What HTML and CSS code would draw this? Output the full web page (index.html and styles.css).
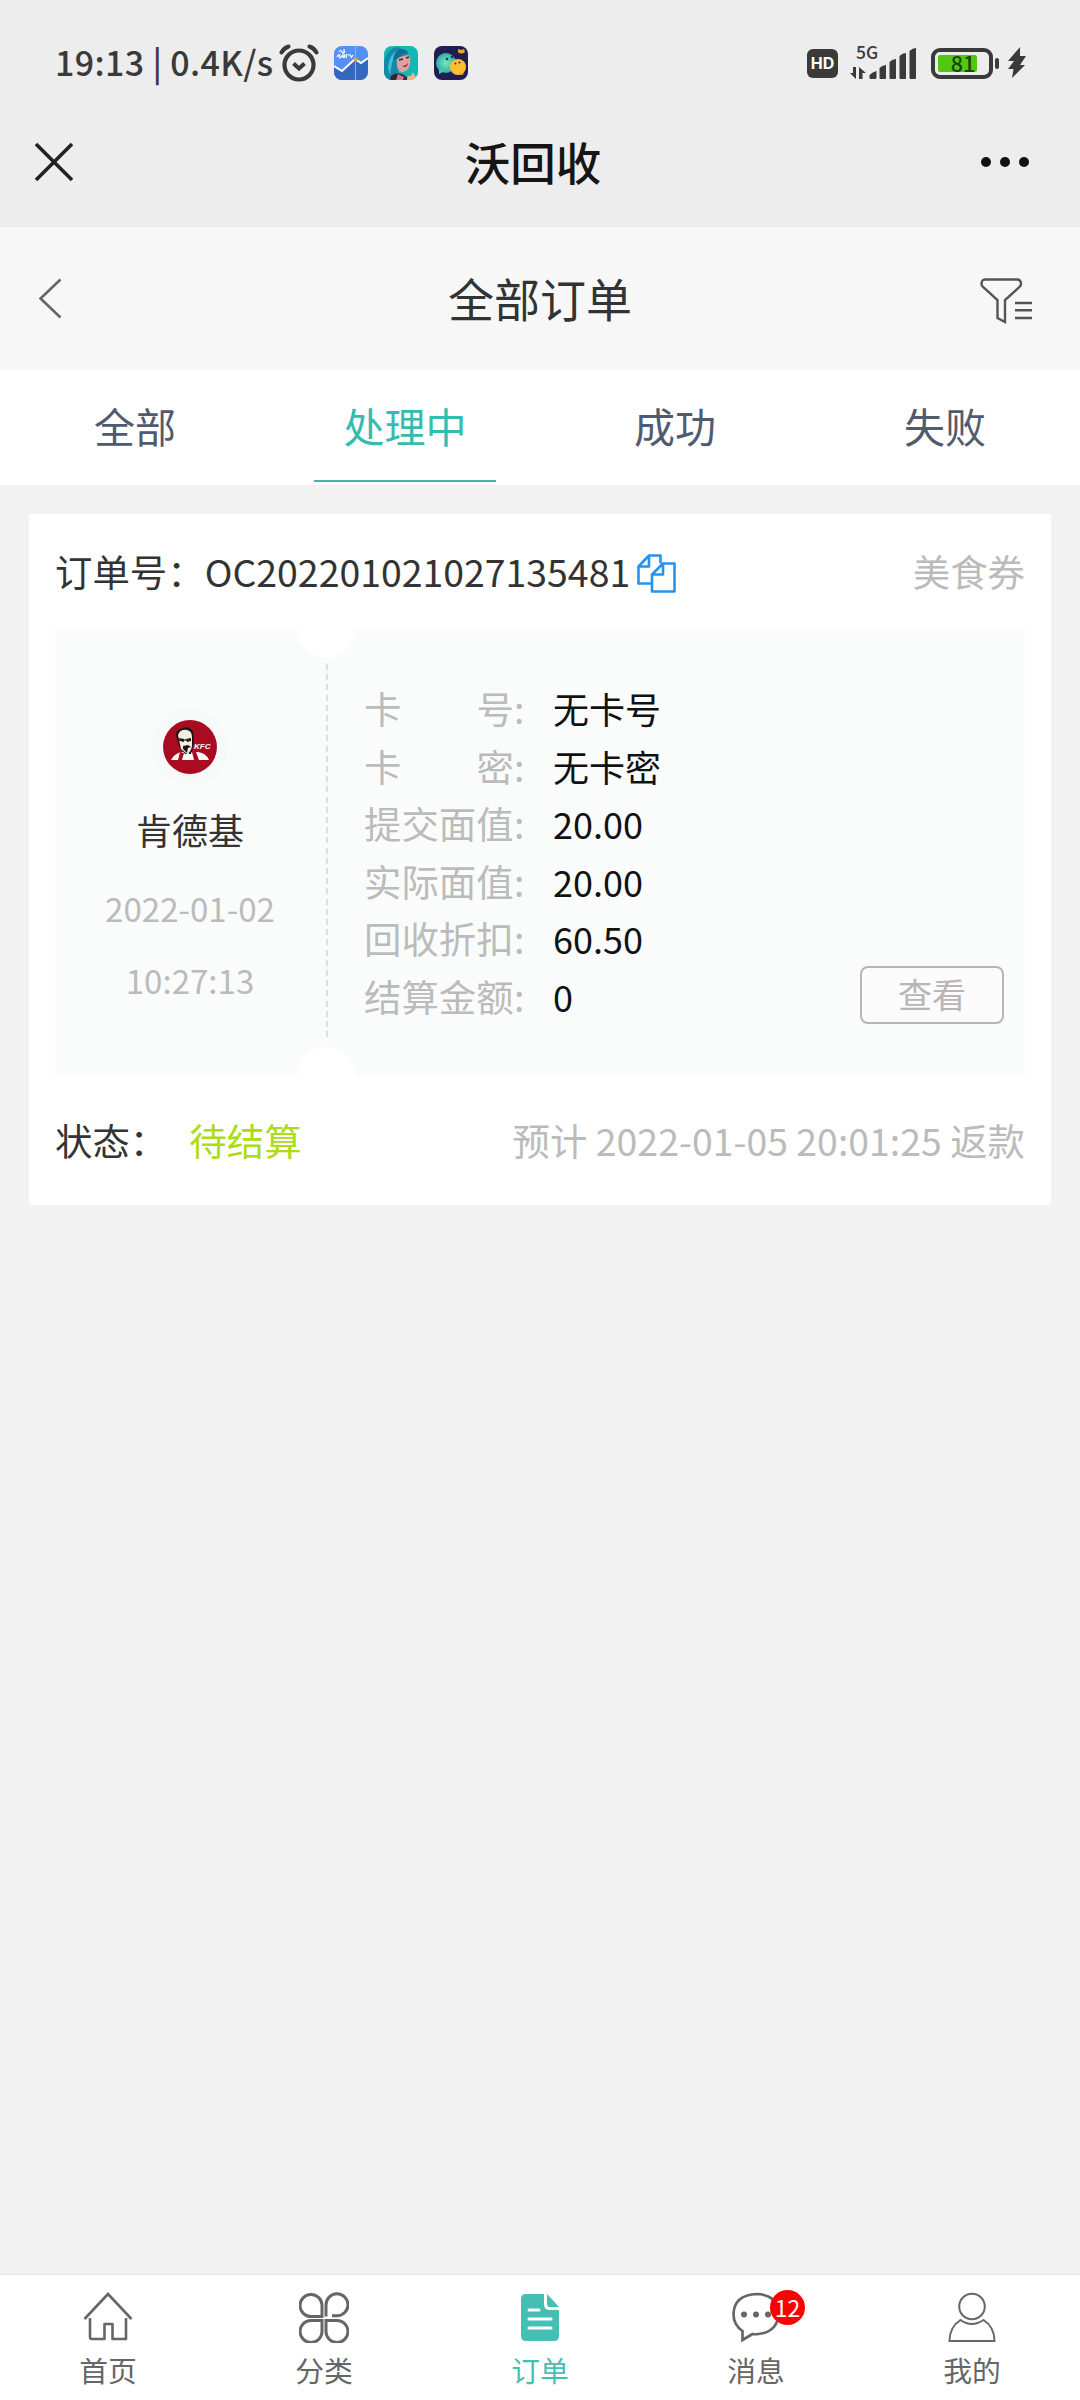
FILE: index.html
```html
<!DOCTYPE html>
<html lang="zh-CN">
<head>
<meta charset="utf-8">
<title>全部订单</title>
<link rel="stylesheet" href="styles.css">
</head>
<body>
<div class="app">
  <header class="system">
    <div class="status">
      <span class="status-text">19:13 | 0.4K/s</span>
      <svg class="alarm" width="40" height="40" viewBox="0 0 40 40" fill="none" stroke="#3a3a3a" stroke-linecap="round"><circle cx="20" cy="22" r="14.5" stroke-width="4.200"/><path d="M14.5 20.500l5.500 5 5.500-5" stroke-width="4" stroke-linecap="butt"/><path d="M2.500 9.500Q5 5 9.500 3.500M37.500 9.500Q35 5 30.500 3.500" stroke-width="4"/></svg>
      <svg class="app-icon" width="34" height="34" viewBox="0 0 34 34"><defs><clipPath id="r"><rect width="34" height="34" rx="8"/></clipPath></defs><g clip-path="url(#r)"><rect width="34" height="34" fill="#5590f8"/><path d="M0 20l8 5 13-12 6 4 7-5v22H0z" fill="#3468be"/><path d="M0 20l8 5 13-12 6 4 7-5" fill="none" stroke="#fff" stroke-width="2"/><path d="M21.500 0v34" stroke="#d9a95a"/><circle cx="21.500" cy="13.500" r="2" fill="#e0a33e"/><path d="M5 6q2-3 3 0t3-1M10 3v4M3 11q1-3 3-2-2 2 0 3l3-3v3m2-4l-1 4m3-4l-1 4m2-3q3-1 3 2m2-2l-2 3" fill="none" stroke="#fff" stroke-width="1.200"/></g></svg>
      <svg class="app-icon" width="34" height="34" viewBox="0 0 34 34"><g clip-path="url(#r)"><rect width="34" height="34" fill="#12b9b4"/><path d="M0 34V16Q3 2 14 1l6 3q6 2 5 9l-9 4-4 17z" fill="#1789a8"/><path d="M4 22Q5 6 18 3q-8 6-10 14l-2 12z" fill="#39c4d5"/><path d="M13 13q6-4 12-4 3 7-1 14-4 5-9 2-3-5-2-12z" fill="#dea19f"/><path d="M12 13q5-4 12-7-4-5-10-2-4 3-5 10z" fill="#156c91"/><path d="M15 14l4-1M22 12l3-1" stroke="#3a2840" stroke-width="1.500"/><path d="M18 20q4 0 6-3-1 6-6 3z" fill="#782840"/><path d="M7 30q6-5 13-1l6 5H6z" fill="#34223e"/><path d="M14 28l6 3-1 3h-7z" fill="#c77b8b"/><path d="M23 34q0-5 4-4l2-4 2 4 3 1v3z" fill="#f4b58d"/></g></svg>
      <svg class="app-icon" width="34" height="34" viewBox="0 0 34 34"><defs><radialGradient id="g"><stop stop-color="#7be3c0"/><stop offset="1" stop-color="#2fb1a5"/></radialGradient></defs><g clip-path="url(#r)"><rect width="34" height="34" fill="#231d55"/><circle cx="12" cy="17" r="10" fill="url(#g)"/><path d="M5 22v6l6-3z" fill="#48c5ae"/><circle cx="24" cy="21" r="8" fill="#fbc02f"/><path d="M25 28l4 1 1-5z" fill="#fbaf22"/><g fill="#26324f"><circle cx="13" cy="13" r="1.300"/><circle cx="18" cy="11" r="1.300"/><circle cx="21.500" cy="17.500" r="1"/><circle cx="25.500" cy="16.500" r="1"/></g><path d="M24 3l3 1 3-1 1 3q-4 3-7 0z" fill="#efa91f"/></g></svg>
      <div class="status-right">
        <span class="hd">HD</span>
        <div class="signal">
          <span class="g5">5G</span>
          <svg width="68" height="14" viewBox="0 0 68 14" class="arrows" fill="#3a3a3a"><path d="M6 1v12L0 7h3V1zM9 13V1l7 6h-3.500v6z"/></svg>
          <svg class="bars" width="68" height="34" viewBox="0 0 68 34" fill="#3a3a3a"><path d="M19.500 29q3-3 7-4v7q0 1-1 1h-5q-1 0-1-1v-2zM29.500 22q3-3 6.500-3v13q0 1-1 1h-4.500q-1 0-1-1zM39.500 16q3-3 6.500-3v19q0 1-1 1h-4.500q-1 0-1-1zM49.500 10q3-3 6.500-3v25q0 1-1 1h-4.500q-1 0-1-1zM59.500 5q3-3 6.500-3v30q0 1-1 1h-4.500q-1 0-1-1z"/></svg>
        </div>
        <div class="battery"><div class="charge"></div><span>81</span></div>
        <i class="nub"></i>
        <svg class="bolt" width="20" height="32" viewBox="0 0 20 32" fill="#3a3a3a"><path d="M13 0L1 14h6l-6 8h5.500L5 31l13-13h-5l6-9h-6z"/></svg>
      </div>
    </div>
    <div class="titlebar">
      <svg width="40" height="40" viewBox="0 0 40 40" fill="none" stroke="#222" stroke-width="3.600"><path d="M2 2l36 36M38 2L2 38"/></svg>
      <h1>沃回收</h1>
      <svg width="50" height="12" viewBox="0 0 50 12" fill="#111"><circle cx="6" cy="6" r="5"/><circle cx="25" cy="6" r="5"/><circle cx="44" cy="6" r="5"/></svg>
    </div>
  </header>

  <div class="pagebar">
    <svg width="24" height="42" viewBox="0 0 24 42" fill="none" stroke="#666" stroke-width="2.600"><path d="M22.500 1.500L2.500 20.500l20 19"/></svg>
    <h2>全部订单</h2>
    <svg class="filter" width="52" height="46" viewBox="0 0 52 46" fill="none" stroke="#555" stroke-width="2.400"><path d="M5 1.500H37q4 0 4 4.500 0 1.500-1.500 3L25 22v22l-7.500-4V22L3 9Q1.500 7.500 1.500 6 1.500 1.500 5 1.500z"/><path d="M35 25h17M35 32.300h17M35 40h17"/></svg>
  </div>

  <nav class="tabs">
    <a class="tab">全部</a><a class="tab active">处理中</a><a class="tab">成功</a><a class="tab">失败</a>
  </nav>

  <main class="content">
    <section class="card">
      <div class="card-head">
        <span>订单号：OC202201021027135481</span>
        <svg class="copy" width="39" height="39" viewBox="0 0 39 39" fill="none" stroke="#2793ea" stroke-width="2.600" stroke-linejoin="round"><path d="M15 29.500H1.500V12.500L12 1.500h11.500v8M12 1.500v11H1.500"/><path d="M15 37.500V20.500L26 9.500h11.500v28zM26 9.500v11H15"/></svg>
        <span class="kind">美食券</span>
      </div>
      <div class="ticket">
        <div class="brand">
          <svg width="80" height="80" viewBox="0 0 80 80"><circle cx="40" cy="40" r="38.500" fill="#f7f8f8"/><circle cx="40" cy="40" r="27" fill="#a90c20"/><path d="M21 53q3-6 10-8h17q8 1 11 8z" fill="#fff"/><path d="M27 32q-3-7 3-10 9-4 13 2l1 11-3 12-5 1-6-7z" fill="#191314"/><path d="M28 28q2-6 9-5 5 1 5 7v9q-1 6-5 8l-6-5z" fill="#f4eee0"/><path d="M29 31l5 1v3l-4-1zM36 32l5-1v3l-4 1zM33 39l5-1 3 2-3 1-1 5-4-4z" fill="#201718"/><path d="M29 33h12" stroke="#201718" stroke-width="1.200"/><path d="M30 45l-2 8h4l2-7zM42 45l2 8h5l-3-8z" fill="#a90c20"/><path d="M35 48l3-2 3 2-1 5h-3z" fill="#fff"/><text x="44" y="41.500" class="kfc">KFC</text></svg>
          <div class="name">肯德基</div>
          <div class="date">2022-01-02</div>
          <div class="time">10:27:13</div>
        </div>
        <div class="divider"></div>
        <dl class="details">
          <div><dt><b>卡</b><b>号</b></dt><dd>无卡号</dd></div>
          <div><dt><b>卡</b><b>密</b></dt><dd>无卡密</dd></div>
          <div><dt>提交面值</dt><dd>20.00</dd></div>
          <div><dt>实际面值</dt><dd>20.00</dd></div>
          <div><dt>回收折扣</dt><dd>60.50</dd></div>
          <div><dt>结算金额</dt><dd>0</dd></div>
        </dl>
        <button class="view">查看</button>
      </div>
      <div class="card-foot">
        <span>状态：</span><span class="pending">待结算</span><span class="eta">预计 2022-01-05 20:01:25 返款</span>
      </div>
    </section>
  </main>

  <nav class="bottom">
    <a><svg width="50" height="52" viewBox="0 0 50 52" fill="none" stroke="#666" stroke-width="2.600"><path d="M1.500 28L25 3l23.500 25"/><path d="M7 27v19q0 2 2 2h12.500V33h8v15H43V27" stroke-linejoin="round"/></svg><span>首页</span></a>
    <a><svg width="50" height="52" viewBox="0 0 50 52" fill="none" stroke="#666" stroke-width="3"><path d="M23 25.500V14A11 11 0 1 0 12 25.500zM27 25.500V14A11 11 0 1 1 38 24.800h-5M23 29.500V40A11 11 0 1 1 12 29.500zM27 29.500V40A11 11 0 1 0 38 29.500z"/></svg><span>分类</span></a>
    <a class="on"><svg width="50" height="52" viewBox="0 0 50 52"><path d="M11 3h18v10q0 6 6 6h9v26q0 5-5 5H11q-5 0-5-5V8q0-5 5-5zM32 3l12 13h-9q-3 0-3-3z" fill="#45beb3"/><path d="M14 19h10M14 28h22M14 37h22" stroke="#fff" stroke-width="3" stroke-linecap="round"/></svg><span>订单</span></a>
    <a><svg width="50" height="52" viewBox="0 0 50 52" fill="none" stroke="#666" stroke-width="2.700"><path d="M11.500 40v9l10-6q3 .5 6 0 19-2 20.500-21Q46 4 26 3 3 4 2.500 23q0 11 9 17z"/><g fill="#666" stroke="none"><circle cx="13" cy="23.500" r="3"/><circle cx="25" cy="23.500" r="3"/><circle cx="37" cy="23.500" r="3"/></g></svg><i class="badge">12</i><span>消息</span></a>
    <a><svg width="50" height="52" viewBox="0 0 50 52" fill="none" stroke="#666" stroke-width="2"><circle cx="25" cy="15.500" r="12.800"/><path d="M2.500 50q0-14 11-21 11 8 23 0 11 7 11 21z"/></svg><span>我的</span></a>
  </nav>
</div>
</body>
</html>
```
FILE: styles.css
```css
* { box-sizing: border-box; }
body { margin: 0; background: #f2f2f2; font-family: "Noto Sans CJK SC", sans-serif; }
h1, h2, dl, dd { margin: 0; }
svg { display: block; flex: none; }
i { font-style: normal; }
.app { width: 1080px; height: 2400px; display: flex; flex-direction: column; }

.system { background: #ededed; height: 227px; border-bottom: 1px solid #e9e9e9; }
.status { display: flex; align-items: center; height: 100px; padding: 26px 53px 0 55px; }
.status-text { width: 224px; font-size: 34px; font-weight: 500; line-height: 40px; padding-bottom: 2px; letter-spacing: .35px; white-space: nowrap; color: #3a3a3a; }
.alarm { margin-right: 15px; }
.app-icon { margin-right: 16px; }
.status-right { display: flex; align-items: center; margin-left: auto; }
.hd { width: 31px; height: 29px; margin-right: 12px; border-radius: 6px; background: #3a3a3a; color: #fff; font: 700 16px/29px Inter, sans-serif; text-align: center; }
.signal { position: relative; width: 68px; height: 34px; }
.signal .g5 { position: absolute; left: 6px; top: -6px; font: 500 17.5px/24px "Noto Sans CJK SC", sans-serif; color: #3a3a3a; }
.arrows { position: absolute; left: 0; top: 20px; }
.bars { position: absolute; left: 0; top: 0; }
.battery { position: relative; width: 62px; height: 31px; margin-left: 13px; border: 4px solid #3a3a3a; border-radius: 9px; padding: 3px; }
.charge { width: 39px; height: 17px; background: #50c80f; border-radius: 2px; }
.battery span { position: absolute; left: 0; top: 0; width: 56px; text-align: center; font-size: 21.5px; font-weight: 500; line-height: 21px; color: #16440a; }
.nub { width: 4px; height: 11px; border-radius: 2px; margin: 0 8px 0 2px; background: #3a3a3a; }
.titlebar { display: flex; align-items: center; justify-content: space-between; height: 127px; padding: 0 50px 4px 34px; }
.titlebar h1 { font-size: 45.500px; font-weight: 500; line-height: 66px; color: #151515; padding: 0 0 2px 12px; }

.pagebar { display: flex; align-items: center; justify-content: space-between; height: 143px; padding: 0 48px 0 38px; background: #f7f7f7; }
.pagebar h2 { font-size: 46px; font-weight: 400; line-height: 66px; color: #333; padding: 0 0 4px 38px; }
.filter { margin-top: 5px; }
.tabs { display: grid; grid-template-columns: repeat(4, 1fr); height: 115px; padding-bottom: 4px; background: #fff; }
.tab { justify-self: center; width: 182px; text-align: center; font-size: 41px; line-height: 110px; color: #515a6e; }
.tab.active { color: #35bcb0; border-bottom: 2px solid #48b3a8; }

.content { flex: 1; padding: 29px; }
.card { height: 691px; padding: 0 26px; background: #fff; font-size: 37.440px; color: #333; }
.card-head { display: flex; align-items: center; height: 115px; line-height: 54px; }
.card-head span { padding-bottom: 1px; }
.copy { margin: 3px 0 0 7px; }
.kind, .eta { margin-left: auto; color: #bbb; }
.ticket { position: relative; display: flex; height: 447px; background: #fafcfb; }
.ticket::before, .ticket::after { content: ""; position: absolute; left: 242px; width: 58px; height: 29px; background: #fff; }
.ticket::before { top: 0; border-radius: 0 0 29px 29px; }
.ticket::after { bottom: 0; border-radius: 29px 29px 0 0; }
.brand { display: flex; flex-direction: column; align-items: center; width: 270px; padding-top: 78px; }
.name { font-size: 36px; line-height: 52px; margin-top: 16px; }
.date, .time { font-size: 33.100px; line-height: 72px; color: #bbb; }
.date { margin-top: 17px; }
.divider { width: 2px; height: 377px; margin: 35px 0 0 1px; background: repeating-linear-gradient(#dfdfdf 0 6px, transparent 6px 10.200px); }
.details { margin: 51px 0 0 36px; }
.details > div { display: flex; height: 57.600px; line-height: 57.600px; }
.details dt { display: flex; justify-content: space-between; width: 150px; color: #bbb; position: relative; }
.details dt::after { content: ":"; position: absolute; left: 150px; }
.details b { font-weight: 400; }
.details dd { margin-left: 39px; font-size: 36px; color: #111; }
.view { margin: 337px 21px 0 auto; width: 144px; height: 58px; border: 2px solid #b9b5b5; border-radius: 8px; background: #fbfbfb; padding: 0 0 3px; font: 34px/51px "Noto Sans CJK SC", sans-serif; color: #bab4b4; }
.card-foot { display: flex; height: 129px; line-height: 129px; }
.pending { margin-left: 22px; color: #abdc14; }

.bottom { display: grid; grid-template-columns: repeat(5, 1fr); height: 126px; background: #fff; border-top: 1px solid #e8e8e8; }
.bottom a { position: relative; display: flex; flex-direction: column; align-items: center; padding-top: 16px; font-size: 28.800px; line-height: 42px; color: #666; }
.bottom span { margin-top: 6px; }
.bottom .on { color: #45beb3; }
.badge { position: absolute; left: 122px; top: 15px; width: 35px; height: 35px; border-radius: 50%; background: #f00; color: #fff; font-size: 23px; line-height: 34px; text-align: center; }
.kfc { font: italic 700 8px "Liberation Sans", sans-serif; fill: #fff; }
```
